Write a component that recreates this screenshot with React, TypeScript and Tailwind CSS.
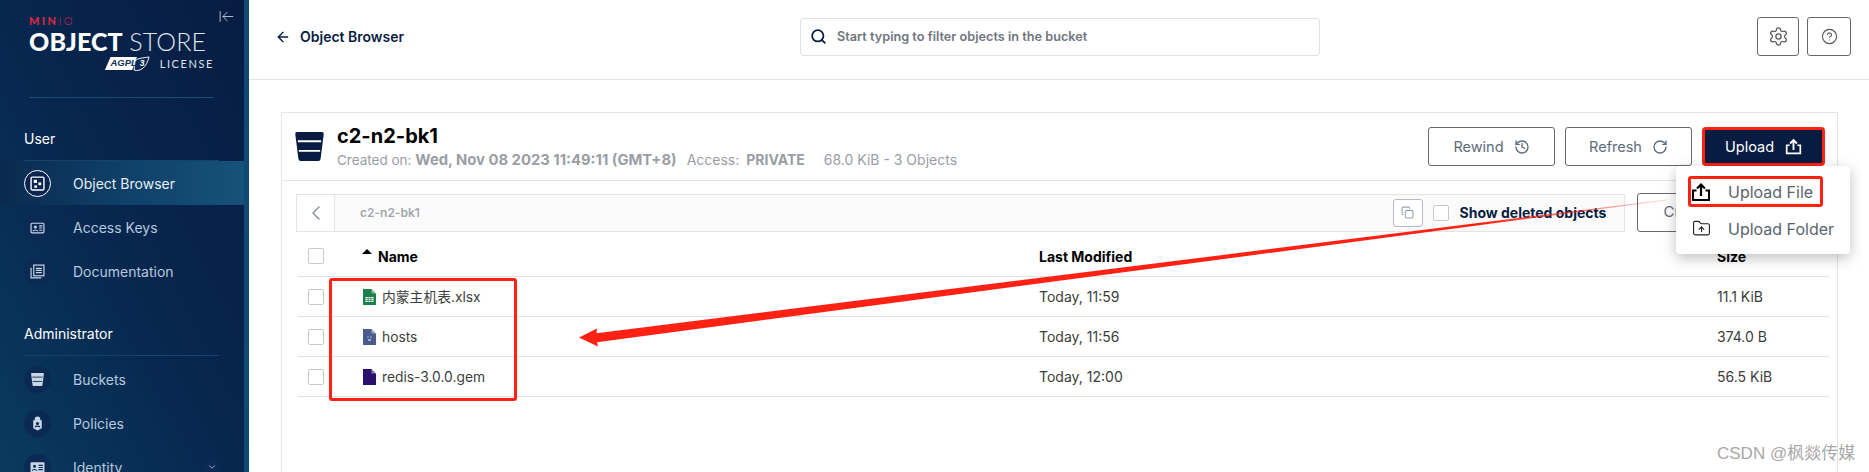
import { ArrowLeft, ArrowLeftToLine, ChevronDown, ChevronLeft, CircleHelp, Copy, FolderUp, History, RotateCw, Search, Settings } from "lucide-react";
import type { ReactNode } from "react";

// --- icons ---

function UploadIcon({ className }: { className?: string }) {
  return (
    <svg viewBox="0 0 20 20" className={className} fill="none" stroke="currentColor">
      <path d="M5.5 8.5H2v9.5h16V8.5h-3.5" strokeWidth="2" />
      <path d="M10 14V2.5M6 6.5l4-4 4 4" strokeWidth="2.2" />
    </svg>
  );
}

function BucketIcon({ className, lines = "#fff" }: { className?: string; lines?: string }) {
  return (
    <svg viewBox="0 0 30 30" className={className}>
      <path d="M2 0h26c1.2 0 1.9 1 1.7 2.2l-3.2 25.6c-.2 1.3-1 2.2-2.2 2.2H5.7c-1.2 0-2-.9-2.2-2.2L.3 2.2C.1 1 .8 0 2 0z" fill="currentColor" />
      <path d="M3 9.5h24M4 19.5h22" stroke={lines} strokeWidth="2" />
    </svg>
  );
}

function NavGlyph({ name }: { name: string }) {
  const cls = "size-[15px]";
  if (name === "Object Browser")
    return (
      <svg viewBox="0 0 14 14" className={cls} fill="none" stroke="currentColor">
        <rect x="1" y="1" width="12" height="12" rx="1" strokeWidth="1.3" />
        <rect x="3.5" y="3.5" width="3" height="3" fill="currentColor" stroke="none" />
        <rect x="7.8" y="6" width="2.6" height="2.6" fill="currentColor" stroke="none" />
        <rect x="4" y="8.8" width="2.6" height="2.2" fill="currentColor" stroke="none" />
      </svg>
    );
  if (name === "Access Keys")
    return (
      <svg viewBox="0 0 14 14" className={cls} fill="none" stroke="currentColor">
        <rect x="1" y="3" width="12" height="9" rx="1" strokeWidth="1.1" />
        <circle cx="5" cy="6.5" r="1.4" fill="currentColor" stroke="none" />
        <path d="M2.8 10.5c.4-1.6 4-1.6 4.4 0M8.5 5.5h3M8.5 7.5h3M8.5 9.5h3" strokeWidth="1" />
      </svg>
    );
  if (name === "Documentation")
    return (
      <svg viewBox="0 0 14 14" className={cls} fill="none" stroke="currentColor" strokeWidth="1.1">
        <rect x="3.5" y="1" width="9.5" height="10" />
        <path d="M1 3.5V13h9.5M5.5 4h5.5M5.5 6h5.5M5.5 8h5.5" />
      </svg>
    );
  if (name === "Buckets") return <BucketIcon className="size-[13px]" lines="#0a2a54" />;
  if (name === "Policies")
    return (
      <svg viewBox="0 0 14 14" className={cls}>
        <path d="M7 0.5a2.6 2.6 0 0 1 2.6 2.6V4H11v7.5L7 13.5l-4-2V4h1.4V3.1A2.6 2.6 0 0 1 7 .5z" fill="currentColor" />
        <circle cx="7" cy="7" r="1.5" fill="#0a2a54" />
        <path d="M4.8 10.5c.5-1.4 3.9-1.4 4.4 0" stroke="#0a2a54" fill="none" />
      </svg>
    );
  return (
    <svg viewBox="0 0 14 14" className={cls}>
      <rect x="0.5" y="2" width="13" height="10" rx="1" fill="currentColor" />
      <circle cx="4.2" cy="5.8" r="1.4" fill="#0a2a54" />
      <path d="M2 10c.4-1.6 4-1.6 4.4 0M8 5h4M8 7h4M8 9h4" stroke="#0a2a54" fill="none" />
    </svg>
  );
}

function FileIcon({ color, children }: { color: string; children?: ReactNode }) {
  return (
    <svg viewBox="0 0 13 16" className="h-[16px] w-[13px] shrink-0">
      <path d="M0 0h8.5L13 4.5V16H0z" fill={color} />
      <path d="M8.5 0v4.5H13z" fill="#fff" opacity="0.45" />
      {children}
    </svg>
  );
}

// --- sidebar ---

function NavItem({ label, active, chevron }: { label: string; active?: boolean; chevron?: boolean }) {
  return (
    <div
      className={`relative flex h-[44px] shrink-0 items-center pl-[24px] ${
        active ? "bg-linear-to-r from-[#0a2a4f] via-[#0f4068] to-[#15527a] text-[#e8eef5]" : "text-[#b5c8de]"
      }`}
    >
      <span
        className={`flex size-[27px] shrink-0 items-center justify-center rounded-full ${
          active ? "border border-white bg-[#0b2550] text-white" : "bg-[#0a2a54] text-[#c8d6e6]"
        }`}
      >
        <NavGlyph name={label} />
      </span>
      <span className="ml-[22px] text-[14px]">{label}</span>
      {chevron && (
        <span className="absolute left-[204px] flex size-[15px] items-center justify-center rounded-sm bg-[#0a2a54]">
          <ChevronDown className="size-[10px] text-[#b5c8de]" />
        </span>
      )}
    </div>
  );
}

function Sidebar() {
  return (
    <aside className="flex h-full w-[249px] shrink-0 overflow-hidden border-r-[5px] border-[#0f4a74] bg-linear-to-tr from-[#0a3a5e] via-[#07264e] to-[#081c42] text-white">
      <div className="relative flex w-full flex-col">
        <ArrowLeftToLine className="absolute left-[218px] top-[8px] size-[17px] stroke-[1.25] text-[#c5d0dd]" />
        <div className="ml-[29px] mt-[16px] w-[185px] shrink-0 border-b border-[#1b4a74] pb-[24px] font-['Lato',sans-serif]">
          <div className="h-[10px] text-[11px] font-black leading-[10px] tracking-[2.4px] text-[#d42a45]">
            MIN<span className="font-light">IO</span>
          </div>
          <div className="mt-[1px] h-[28px] whitespace-nowrap text-[25px] leading-[28px] tracking-[0.1px]">
            <span className="font-black">OBJECT</span> <span className="font-light text-[#dfe5ec]">STORE</span>
          </div>
          <div className="flex h-[18px] items-center justify-end gap-[9px]">
            <svg viewBox="0 0 48 17" className="h-[16px] w-[47px]">
              <path d="M6 1h28L29 15H0z" fill="#fff" />
              <path d="M31 15c7 2 13-3 16-14-5 1-12 1-15 4z" fill="#0a2a54" stroke="#fff" />
              <text x="6" y="10.5" fontSize="10" fontStyle="italic" fontWeight="700" fill="#0a2a54" fontFamily="Liberation Sans">AGPL</text>
              <text x="37" y="11" fontSize="9" fontStyle="italic" fontWeight="700" fill="#fff" fontFamily="Liberation Sans">3</text>
            </svg>
            <span className="text-[11px] tracking-[1.6px] text-[#dfe5ec]">LICENSE</span>
          </div>
        </div>
        <div className="ml-[24px] mt-[31px] shrink-0 text-[14px] leading-[20px]">User</div>
        <div className="ml-[24px] mr-[25px] mt-[11px] shrink-0 border-b border-[#13426a]" />
        <NavItem label="Object Browser" active />
        <NavItem label="Access Keys" />
        <NavItem label="Documentation" />
        <div className="ml-[24px] mt-[31px] shrink-0 text-[14px] leading-[20px]">Administrator</div>
        <div className="mb-[1px] ml-[24px] mr-[25px] mt-[11px] shrink-0 border-b border-[#13426a]" />
        <NavItem label="Buckets" />
        <NavItem label="Policies" />
        <NavItem label="Identity" chevron />
      </div>
    </aside>
  );
}

// --- object browser ---

function Checkbox() {
  return <span className="block size-[16px] rounded-[2px] border border-[#c8c8c8] bg-white" />;
}

function OutlineButton({ label, icon }: { label: string; icon: ReactNode }) {
  return (
    <button className="flex h-[39px] w-[127px] items-center justify-center gap-[10px] rounded-[3px] border border-[#696969] text-[14.5px] text-[#5e6b7a]">
      {label}
      {icon}
    </button>
  );
}

const files = [
  {
    name: "内蒙主机表.xlsx",
    modified: "Today, 11:59",
    size: "11.1 KiB",
    icon: (
      <FileIcon color="#1a8048">
        <rect x="2.5" y="8" width="8" height="5" fill="#fff" />
        <path d="M2.5 9.6h8M2.5 11.4h8M5.2 8v5M7.8 8v5" stroke="#1a8048" strokeWidth="0.7" />
      </FileIcon>
    ),
  },
  {
    name: "hosts",
    modified: "Today, 11:56",
    size: "374.0 B",
    icon: (
      <FileIcon color="#4b5a8c">
        <path d="M4.5 8h1M7.5 8h1M5 11h3" stroke="#fff" strokeWidth="1" />
      </FileIcon>
    ),
  },
  { name: "redis-3.0.0.gem", modified: "Today, 12:00", size: "56.5 KiB", icon: <FileIcon color="#2a0f6e" /> },
];

const rowGrid = "grid grid-cols-[54px_677px_678px_1fr] items-center border-b border-[#e2e2e2] pl-[10px]";

function BucketCard() {
  return (
    <section className="relative ml-[32px] mr-[31px] mt-[32px] h-[360px] border border-b-0 border-[#e5e5e5] bg-white">
      <div className="flex h-[68px] items-center border-b border-[#e5e5e5] pl-[13px] pr-[12px]">
        <BucketIcon className="size-[29px] shrink-0 text-[#081c42]" />
        <div className="ml-[13px]">
          <h1 className="text-[20px] font-bold leading-[24px] text-black">c2-n2-bk1</h1>
          <p className="mt-[2px] whitespace-nowrap text-[14px] leading-[20px] text-[#9a9ea5]">
            <span className="text-[13.5px]">Created on: </span>
            <strong className="text-[14.8px] font-bold">Wed, Nov 08 2023 11:49:11 (GMT+8)</strong>
            <span className="ml-[10px]">Access: </span>
            <strong className="ml-[3px] font-bold">PRIVATE</strong>
            <span className="ml-[19px]">68.0 KiB - 3 Objects</span>
          </p>
        </div>
        <div className="ml-auto flex gap-[10px]">
          <OutlineButton label="Rewind" icon={<History className="size-[16px]" />} />
          <OutlineButton label="Refresh" icon={<RotateCw className="size-[16px]" />} />
          <button className="flex h-[39px] w-[123px] items-center justify-center gap-[11px] rounded-[4px] border-[3px] border-[#ff2113] bg-[#081c42] text-[14.5px] text-white">
            Upload
            <UploadIcon className="size-[17px]" />
          </button>
        </div>
      </div>

      <div className="px-[14px] pt-[12px]">
        <div className="flex items-center">
          <div className="flex h-[38px] w-[1333px] items-center border border-[#e5e5e5] bg-[#fbfbfb]">
            <span className="flex h-full w-[38px] items-center justify-center border-r border-[#e5e5e5] bg-white">
              <ChevronLeft className="size-[24px] stroke-[1.5] text-[#8b9198]" />
            </span>
            <span className="ml-[25px] text-[12px] font-semibold text-[#a3a7ad]">c2-n2-bk1</span>
            <span className="ml-auto flex h-[28px] w-[30px] items-center justify-center rounded-[3px] border border-[#b4bcc6] bg-white">
              <Copy className="size-[13px] text-[#9aa3ad]" />
            </span>
            <span className="ml-[10px]"><Checkbox /></span>
            <span className="ml-[11px] mr-[18px] text-[14px] font-bold text-[#081c42]">Show deleted objects</span>
          </div>
          <button className="ml-[12px] h-[39px] w-[186px] rounded-[3px] border border-[#696969] pl-[25px] text-left text-[15px] text-[#5e6b7a]">
            Create new path
          </button>
        </div>

        <div className="ml-[2px] w-[1531px]">
          <div className={`${rowGrid} h-[45px] pt-[4px] text-[14px] font-bold text-black`}>
            <Checkbox />
            <span className="relative flex items-center pl-[16px]">
              <span className="absolute left-0 top-[3px] size-0 border-x-[5px] border-b-[5px] border-x-transparent border-b-black" />
              Name
            </span>
            <span>Last Modified</span>
            <span>Size</span>
          </div>
          {files.map((file) => (
            <div key={file.name} className={`${rowGrid} h-[40px] text-[14px] text-[#3d3d3d]`}>
              <Checkbox />
              <span className="mt-[1px] flex items-center gap-[6px] pl-[1px] text-[13.8px]">
                {file.icon}
                {file.name}
              </span>
              <span>{file.modified}</span>
              <span>{file.size}</span>
            </div>
          ))}
        </div>
      </div>

      {/* upload dropdown */}
      <div className="absolute left-[1394px] top-[53px] z-20 h-[88px] w-[174px] rounded-[4px] bg-white shadow-[0_4px_14px_rgba(0,0,0,0.25)]">
        <div className="ml-[12px] mt-[10px] flex h-[31px] w-[135px] items-center rounded-[3px] border-[3px] border-[#ff2113]">
          <UploadIcon className="size-[20px] shrink-0 text-black" />
          <span className="ml-[17px] text-[16px] text-[#5a6470]">Upload File</span>
        </div>
        <div className="ml-[12px] mt-[6px] flex h-[31px] items-center pl-[4px]">
          <FolderUp className="size-[19px] shrink-0 stroke-[1.4] text-[#222]" />
          <span className="ml-[17px] whitespace-nowrap text-[16px] text-[#5a6470]">Upload Folder</span>
        </div>
      </div>
    </section>
  );
}

function TopBar() {
  return (
    <header className="flex h-[80px] items-center border-b border-[#e5e5e5] pb-[6px] pl-[26px]">
      <div className="flex w-[525px] items-center gap-[9px] text-[#081c42]">
        <ArrowLeft className="size-[16px] stroke-[2]" />
        <span className="text-[14px] font-semibold">Object Browser</span>
      </div>
      <div className="flex h-[38px] w-[520px] items-center rounded-[3px] border border-[#e2e2e2] pl-[9px]">
        <Search className="size-[17px] stroke-[2.5] text-[#081c42]" />
        <span className="ml-[10px] text-[12.7px] font-semibold text-[#6f7680]">Start typing to filter objects in the bucket</span>
      </div>
      <button className="ml-[437px] flex h-[39px] w-[42px] items-center justify-center rounded-[3px] border border-[#696969]">
        <Settings className="size-[21px] stroke-[1.4] text-[#555]" />
      </button>
      <button className="ml-[8px] flex h-[39px] w-[44px] items-center justify-center rounded-[3px] border border-[#696969]">
        <CircleHelp className="size-[17px] stroke-[1.6] text-[#555]" />
      </button>
    </header>
  );
}

export default function App() {
  return (
    <div className="relative flex h-[472px] w-[1869px] overflow-hidden bg-white font-['Inter','Noto_Sans_CJK_SC',sans-serif]">
      <Sidebar />
      <main className="min-w-0 flex-1">
        <TopBar />
        <BucketCard />
      </main>

      {/* red annotations drawn on top of the screenshot */}
      <div className="pointer-events-none absolute left-[329px] top-[278px] z-10 h-[123px] w-[188px] rounded-[3px] border-[3px] border-[#ff2113]" />
      <svg className="pointer-events-none absolute left-0 top-0 z-10 h-[472px] w-[1869px]" viewBox="0 0 1869 472">
        <defs>
          <linearGradient id="fade" gradientUnits="userSpaceOnUse" x1="1480" y1="0" x2="1667" y2="0">
            <stop offset="0" stopColor="#ff2113" />
            <stop offset="1" stopColor="#ff2113" stopOpacity="0.2" />
          </linearGradient>
        </defs>
        <path d="M579 337.5L597 328.5L596.5 333.2L1667 199.5L1667 200.2L597 342.2L598 346.5Z" fill="url(#fade)" />
      </svg>

      <span className="absolute left-[1717px] top-[444px] z-10 font-['Liberation_Sans','Noto_Sans_CJK_SC',sans-serif] text-[17px] leading-[20px] text-[#a8a8a8]">
        CSDN @枫燚传媒
      </span>
    </div>
  );
}
